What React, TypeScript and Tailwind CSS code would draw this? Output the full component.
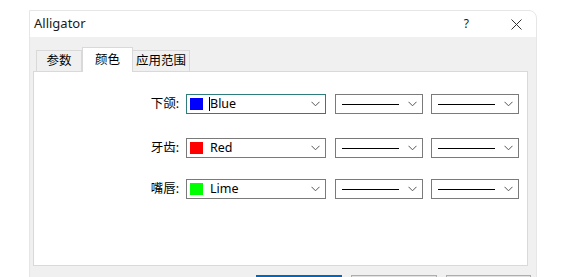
import React from 'react';

const font = { fontFamily: '"Segoe UI", "Noto Sans", "Noto Sans CJK SC", sans-serif' };

const Chevron = () => (
  <svg width="9" height="6" viewBox="0 0 9 6" className="shrink-0">
    <path d="M0.5 0.8 L4.5 4.8 L8.5 0.8" fill="none" stroke="#555" strokeWidth="1" />
  </svg>
);

const colorRows = [
  { label: '下颌:', name: 'Blue', swatch: 'bg-[#0000ff]', focused: true },
  { label: '牙齿:', name: 'Red', swatch: 'bg-[#ff0000]', focused: false },
  { label: '嘴唇:', name: 'Lime', swatch: 'bg-[#00ff00]', focused: false },
];

const LineSelect = () => (
  <div className="w-[88px] h-[20px] border border-[#7a7a7a] bg-white flex items-center pl-[6px] pr-[5px]">
    <div className="w-[57px] h-px bg-black" />
    <div className="flex-1" />
    <Chevron />
  </div>
);

export default function App() {
  return (
    <div className="w-[578px] h-[277px] bg-white overflow-hidden pt-[10px] pl-[29px]" style={font}>
      <div className="w-[508px] h-[290px] rounded-tr-[8px] border border-[#e6e6e6] bg-[#f0f0f0] overflow-hidden">
        {/* title bar */}
        <div className="h-[26px] bg-white flex items-center pl-[4px] pr-[14px] text-[13px] text-[#1a1a1a]">
          <span>Alligator</span>
          <div className="flex-1" />
          <span className="text-[12px] mr-[42px]">?</span>
          <svg width="11" height="11" viewBox="0 0 11 11">
            <path d="M0.5 0.5 L10.5 10.5 M10.5 0.5 L0.5 10.5" stroke="#333" strokeWidth="1" />
          </svg>
        </div>

        {/* tabs */}
        <div className="pt-[10px] px-[3px]">
          <div className="flex items-end h-[24px] pl-[3px] text-[12.5px] text-black">
            <div className="h-[21px] w-[46px] border border-b-0 border-[#d9d9d9] bg-[#f0f0f0] flex items-center justify-center">参数</div>
            <div className="h-[25px] w-[51px] border border-b-0 border-[#d9d9d9] bg-white flex items-start justify-center pt-[3px] -mb-px relative z-10">颜色</div>
            <div className="h-[21px] w-[57px] border border-b-0 border-l-0 border-[#d9d9d9] bg-[#f0f0f0] flex items-center justify-center">应用范围</div>
          </div>

          {/* panel */}
          <div className="w-[495px] h-[195px] border border-[#d9d9d9] bg-white pt-[22px] pl-[114px]">
            {colorRows.map((r, i) => (
              <div key={r.name} className={`flex items-center ${i === 1 ? 'mt-[24px]' : i === 2 ? 'mt-[21px]' : ''}`}>
                <div className="w-[32px] text-right text-[12.5px] text-black pr-[1px]">{r.label}</div>
                <div
                  className={`ml-[6px] w-[140px] h-[20px] bg-white flex items-center pl-[3px] pr-[5px] border ${
                    r.focused ? 'border-[#2e7d7d]' : 'border-[#7a7a7a]'
                  }`}
                >
                  <div className={`w-[13px] h-[12px] ${r.swatch}`} />
                  <div className="ml-[7px] flex items-center text-[12.5px] text-black">
                    {r.focused && <div className="w-px h-[14px] bg-black -ml-px" />}
                    <span>{r.name}</span>
                  </div>
                  <div className="flex-1" />
                  <Chevron />
                </div>
                <div className="ml-[9px]">
                  <LineSelect />
                </div>
                <div className="ml-[8px]">
                  <LineSelect />
                </div>
              </div>
            ))}
          </div>

          {/* buttons */}
          <div className="flex mt-[9px] pl-[223px] gap-[9px]">
            <div className="w-[86px] h-[23px] border-2 border-[#0067c0] bg-[#e1e1e1]" />
            <div className="w-[86px] h-[23px] border border-[#adadad] bg-[#e1e1e1]" />
            <div className="w-[85px] h-[23px] border border-[#adadad] bg-[#e1e1e1]" />
          </div>
        </div>
      </div>
    </div>
  );
}
